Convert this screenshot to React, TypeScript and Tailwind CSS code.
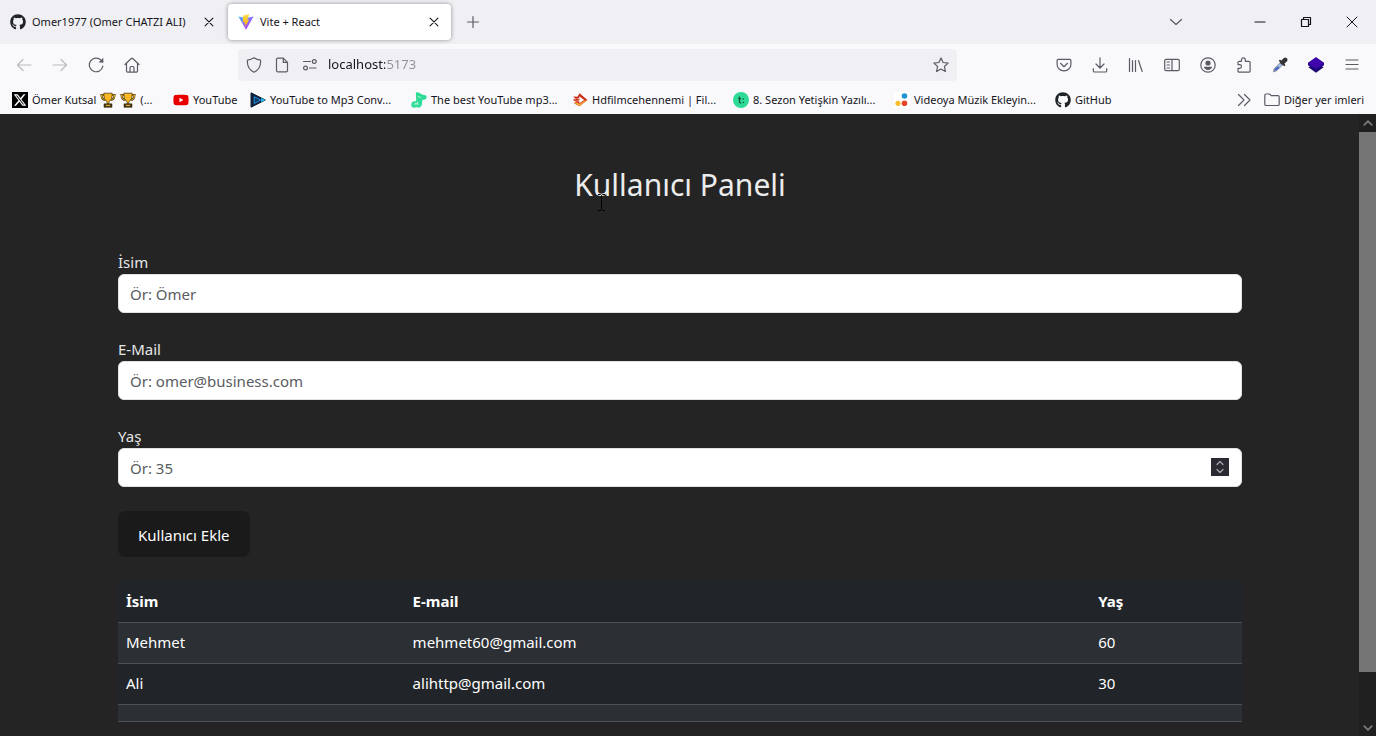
import React from 'react';
import { FaGithub, FaXTwitter, FaYoutube } from 'react-icons/fa6';

type IconProps = { children: React.ReactNode; size?: string };

function Icon({ children, size = 'size-4' }: IconProps) {
  return (
    <svg
      viewBox="0 0 16 16"
      className={`${size} shrink-0`}
      fill="none"
      stroke="currentColor"
      strokeWidth="1.2"
      strokeLinecap="round"
      strokeLinejoin="round"
      aria-hidden="true"
    >
      {children}
    </svg>
  );
}

const ViteLogo = () => (
  <svg viewBox="0 0 16 16" className="size-4 shrink-0" aria-hidden="true">
    <defs>
      <linearGradient id="vite-a" x1="0" y1="0" x2="0.7" y2="1">
        <stop offset="0" stopColor="#41b9f5" />
        <stop offset="0.5" stopColor="#8a70fb" />
        <stop offset="1" stopColor="#bd34fe" />
      </linearGradient>
      <linearGradient id="vite-b" x1="0" y1="0" x2="0" y2="1">
        <stop offset="0" stopColor="#ffdc4a" />
        <stop offset="1" stopColor="#ffa800" />
      </linearGradient>
    </defs>
    <path d="M.4 2.5 8 15.7 15.6 2.5 8 4z" fill="url(#vite-a)" />
    <path d="M11.300.300 5.200 1.500 4.800 8.200l2.100-.4-.5 2.600 1.300-.4-.8 3.600 4.300-8-2 .4z" fill="url(#vite-b)" />
  </svg>
);

const Trophy = () => (
  <svg viewBox="0 0 16 16" className="size-4 shrink-0" aria-hidden="true">
    <path d="M4 3H1.500c0 3 1 4.700 4 5M12 3h2.500c0 3-1 4.700-4 5" fill="none" stroke="#3a2b08" strokeWidth="2" />
    <path d="M4 3H1.500c0 3 1 4.700 4 5M12 3h2.500c0 3-1 4.700-4 5" fill="none" stroke="#f5b51c" strokeWidth="1" />
    <path d="M3.800 1.200h8.400c0 4-.6 7-3.200 8.200v2.200H7V9.400C4.400 8.200 3.800 5.200 3.800 1.200z" fill="#f7b824" stroke="#3a2b08" strokeWidth=".7" />
    <path d="M4 11.800h8v3.500H4z" fill="#4c3b16" stroke="#241a05" strokeWidth=".5" />
    <path d="M6 12.800h4v1.200H6z" fill="#d9a426" />
  </svg>
);

const XLogo = () => (
  <span className="flex size-4 shrink-0 items-center justify-center bg-black text-white">
    <FaXTwitter className="size-3.5" />
  </span>
);

const YoutubeLogo = () => <FaYoutube className="size-4 shrink-0 text-[#e80000]" />;

const PlayLogo = () => (
  <svg viewBox="0 0 16 16" className="size-4 shrink-0" aria-hidden="true">
    <path d="M1 .8 15.300 8 1 15.200z" fill="#12203c" stroke="#12203c" strokeLinejoin="round" />
    <path d="M4.200 4.800 10.500 8l-6.300 3.500z" fill="#10355a" stroke="#2196e8" strokeWidth="1" />
    <path d="M11 6 15.700 8 11 10.200z" fill="#27b6e8" />
  </svg>
);

const NoteLogo = () => (
  <svg viewBox="0 0 16 16" className="size-4 shrink-0" aria-hidden="true">
    <path
      d="M5 .6c2-.8 3.400.6 5 1.300 1.800.8 4 1 5.300 1.800.6.400.4 2.600-.4 3.300-1 .8-2.300.4-3.400 1.200-.8.7-.2 2.300-.6 4.200-.4 1.900-1.800 3.200-3.600 3.200-1 0-1.500-.4-2-.6-1 .8-2.700.9-3.800.2C.3 14.500-.2 12.400.8 10.800c.9-1.400 2.300-1.700 4.200-1.600C5.500 6 4.600 3.200 5 .6z"
      fill="#2edb96"
    />
    <path d="m6.600 4 3.600 2M6.500 9.600v2.600M5 11.400v2.200M2.600 12.600l2.200-1.400 3.200 1.200" fill="none" stroke="#b5f5da" strokeWidth=".9" />
  </svg>
);

const FilmLogo = () => (
  <svg viewBox="0 0 16 16" className="size-4 shrink-0" aria-hidden="true">
    <path d="M7.500 1.300 15.500 8l-8 6.300L2 11.200l2.200-1.700L.6 8l2.800-1.300-2.200-2.200 4.300.3z" fill="#c92b12" />
    <path d="m2 11.200 5.500 3.100L15.500 8l-2.500.2-5.300 3.600-2.900-1.500z" fill="#f2a13a" />
    <path d="M2.800 6.500h4.500V4.300L12.200 8l-4.900 3.200V9.200H4.600z" fill="#fff" />
    <path d="M3.200 5.900 8.500 7.900l-4 1.200z" fill="#c92b12" />
  </svg>
);

const TechLogo = () => (
  <svg viewBox="0 0 16 16" className="size-4 shrink-0" aria-hidden="true">
    <circle cx="8" cy="8" r="8" fill="#2edb96" />
    <path d="M6.500 4.500v5.300c0 .8.500 1.200 1.600 1M5.200 6.600h2.900" fill="none" stroke="#14513a" strokeWidth="1.200" />
    <circle cx="10.300" cy="7" r=".8" fill="#14513a" />
    <circle cx="10.300" cy="10.500" r=".8" fill="#14513a" />
  </svg>
);

const DotsLogo = () => (
  <svg viewBox="0 0 16 16" className="size-4 shrink-0" aria-hidden="true">
    <path d="M0 0h16v16H0z" fill="#fff" />
    <circle cx="10.500" cy="4" r="2.800" fill="#2394d2" />
    <circle cx="4" cy="11.300" r="2.600" fill="#f9bd2c" />
    <circle cx="10.500" cy="11.300" r="2.800" fill="#e8442a" />
  </svg>
);

const GithubLogo = () => <FaGithub className="size-4 shrink-0 text-[#1f2328]" />;

const CloseIcon = ({ size }: { size?: string }) => (
  <Icon size={size}>
    <path d="m3.500 3.500 9 9M12.500 3.500l-9 9" />
  </Icon>
);

const bookmarks = [
  { icon: XLogo, label: 'Ömer Kutsal', extra: true, width: 'w-[161px]' },
  { icon: YoutubeLogo, label: 'YouTube', width: 'w-[77px]' },
  { icon: PlayLogo, label: 'YouTube to Mp3 Conv...', width: 'w-[161px]' },
  { icon: NoteLogo, label: 'The best YouTube mp3...', width: 'w-[161px]' },
  { icon: FilmLogo, label: 'Hdfilmcehennemi | Fil...', width: 'w-[161px]' },
  { icon: TechLogo, label: '8. Sezon Yetişkin Yazılı...', width: 'w-[161px]' },
  { icon: DotsLogo, label: 'Videoya Müzik Ekleyin...', width: 'w-[161px]' },
  { icon: GithubLogo, label: 'GitHub', width: 'w-[77px]' },
];

const users = [
  { name: 'Mehmet', email: 'mehmet60@gmail.com', age: '60' },
  { name: 'Ali', email: 'alihttp@gmail.com', age: '30' },
];

function TabStrip() {
  return (
    <div className="flex h-11 items-center bg-[#f0f0f4] text-[#15141a]">
      <div className="flex w-[228px] items-center gap-1.5 pr-3 pl-2.5">
        <GithubLogo />
        <span className="flex-1 whitespace-nowrap">Omer1977 (Omer CHATZI ALI)</span>
        <button type="button" aria-label="Sekmeyi kapat">
          <CloseIcon size="size-3.5" />
        </button>
      </div>
      <div className="flex h-9 w-[223px] items-center gap-1.5 rounded bg-white px-2.5 shadow-[0_0_4px_rgba(0,0,0,0.4)]">
        <ViteLogo />
        <span className="flex-1">Vite + React</span>
        <button type="button" aria-label="Sekmeyi kapat">
          <CloseIcon size="size-3.5" />
        </button>
      </div>
      <button type="button" aria-label="Yeni sekme" className="ml-3.5 text-[#5b5b66]">
        <Icon>
          <path d="M8 2.500v11M2.500 8h11" />
        </Icon>
      </button>
      <div className="ml-auto flex items-center gap-[30px] pr-4">
        <button type="button" aria-label="Tüm sekmeleri listele" className="mr-[38px] text-[#5b5b66]">
          <Icon>
            <path d="m2.500 5.500 5.500 5 5.500-5" />
          </Icon>
        </button>
        <button type="button" aria-label="Simge durumuna küçült">
          <Icon>
            <path d="M3 8h10" />
          </Icon>
        </button>
        <button type="button" aria-label="Önceki boyut">
          <Icon>
            <path d="M3.500 5.500h7v7h-7zM5.500 5.500v-2h7v7h-2" />
          </Icon>
        </button>
        <button type="button" aria-label="Kapat">
          <Icon>
            <path d="m3 3 10 10M13 3 3 13" strokeWidth="1" />
          </Icon>
        </button>
      </div>
    </div>
  );
}

function Toolbar() {
  return (
    <div className="flex h-[42px] items-center text-[#5b5b66]">
      <div className="flex w-[238px] items-center gap-5 pl-4">
        <button type="button" aria-label="Geri" className="text-[#bbbbc2]">
          <Icon>
            <path d="M15 8H1.500M7 2.500 1.500 8 7 13.500" />
          </Icon>
        </button>
        <button type="button" aria-label="İleri" className="text-[#bbbbc2]">
          <Icon>
            <path d="M1 8h13.500M9 2.500 14.500 8 9 13.500" />
          </Icon>
        </button>
        <button type="button" aria-label="Yenile">
          <Icon>
            <path d="M14.800 9.200a6.800 6.800 0 1 1-1.800-6L14.700 5" />
            <path d="M15.300.8v4.700h-4.700z" fill="currentColor" stroke="none" />
          </Icon>
        </button>
        <button type="button" aria-label="Giriş sayfası">
          <Icon>
            <path d="m1 7.500 6.300-6a1 1 0 0 1 1.400 0l6.300 6M2.500 6.500V14a1.200 1.200 0 0 0 1.200 1.200h8.600a1.200 1.200 0 0 0 1.200-1.200V6.500M6 15v-4.300a1.200 1.200 0 0 1 1.200-1.200h1.600a1.200 1.200 0 0 1 1.200 1.200V15" />
          </Icon>
        </button>
      </div>
      <div className="flex h-8 max-w-[719px] flex-1 items-center gap-3 rounded bg-[#f0f0f4] px-2">
        <Icon>
          <path d="M8 .8c2 1.300 4 2 6.500 2.300.6 5.400-1.500 9.700-6.500 12.100C3 12.800.9 8.500 1.500 3.100 4 2.800 6 2.100 8 .8z" />
        </Icon>
        <Icon>
          <path d="M3.700 1.200h5.600L13.500 5.400v8.200a1.200 1.200 0 0 1-1.200 1.200H3.700a1.200 1.200 0 0 1-1.200-1.200V2.400a1.200 1.200 0 0 1 1.200-1.200zM9.300 1.200v4.200h4.200" />
        </Icon>
        <Icon>
          <path d="M1.500 4.500h7M7.500 11H14" />
          <circle cx="12.300" cy="4.500" r="1.900" />
          <circle cx="3.500" cy="11" r="1.900" />
        </Icon>
        <input
          type="text"
          aria-label="Adres"
          defaultValue="localhost:5173"
          className="-ml-0.5 min-w-0 flex-1 bg-[linear-gradient(90deg,#15141a_57px,#8f8f99_57px)] bg-clip-text text-[13px] text-transparent caret-black outline-none"
        />
        <button type="button" aria-label="Bu sayfayı yer imlerine ekle">
          <Icon>
            <path d="m8 .9 2.100 4.600 5 .6-3.700 3.400 1 5L8 12l-4.400 2.500 1-5L.9 6.100l5-.6z" />
          </Icon>
        </button>
      </div>
      <div className="ml-auto flex items-center gap-5 pr-4 pl-4">
        <button type="button" aria-label="Pocket'a kaydet">
          <Icon>
            <path d="M2.300 2.300h11.400a1.200 1.200 0 0 1 1.200 1.200v4a6.900 6.400 0 0 1-13.800 0v-4a1.200 1.200 0 0 1 1.200-1.200zM4.500 6.300 8 9.700l3.500-3.400" />
          </Icon>
        </button>
        <button type="button" aria-label="İndirilenler">
          <Icon>
            <path d="M8 .8v10M4 7l4 4 4-4M1.300 11.500v2.200a1.300 1.300 0 0 0 1.300 1.300h10.800a1.300 1.300 0 0 0 1.300-1.300v-2.200" />
          </Icon>
        </button>
        <button type="button" aria-label="Kitaplık">
          <Icon>
            <path d="M1.500 1.500v13M4.500 3.500v11M7.500 3.500v11M10.500 3.500l3.700 11" />
          </Icon>
        </button>
        <button type="button" aria-label="Kenar çubuğu">
          <Icon>
            <rect x=".7" y="2.300" width="14.600" height="11.400" rx="1.500" />
            <path d="M8 2.500v11M3 5h2.500M3 8h2.500M3 11h2.500" />
          </Icon>
        </button>
        <button type="button" aria-label="Hesap">
          <Icon>
            <circle cx="8" cy="8" r="7.200" />
            <circle cx="8" cy="6" r="2.600" fill="currentColor" stroke="none" />
            <path d="M3.800 9.700h8.400c-.4 2-2 3.200-4.200 3.200s-3.800-1.200-4.200-3.200z" fill="currentColor" stroke="none" />
          </Icon>
        </button>
        <button type="button" aria-label="Uzantılar">
          <Icon>
            <path d="M5.500 4.300V2.700a1.900 1.900 0 0 1 3.800 0v1.600h3.600a1.200 1.200 0 0 1 1.200 1.200v8.400a1.200 1.200 0 0 1-1.200 1.200H3.200A1.200 1.200 0 0 1 2 13.900v-2.600h1.700a1.800 1.800 0 0 0 0-3.600H2V5.500a1.200 1.200 0 0 1 1.200-1.200z" />
          </Icon>
        </button>
        <button type="button" aria-label="Renk seçici">
          <Icon>
            <path d="m1.500 14.500.8-3 6.400-6.300 2.300 2.300-6.500 6.200z" fill="#a5bce6" stroke="#7d8088" strokeWidth=".8" />
            <path d="m2 14 .9-2.300 3-2.500 1.700 1.500-3 2.500z" fill="#4567bd" stroke="none" />
            <path d="m8 3.800 4.300 4.300" stroke="#333" strokeWidth="2" />
            <path d="m10.500 5.500 2.700-2.700" stroke="#333" strokeWidth="4.500" />
          </Icon>
        </button>
        <button type="button" aria-label="Katmanlar">
          <Icon>
            <path d="m8 5.500 7.600 4.800L8 15.700.4 10.300z" fill="#1c0670" stroke="none" />
            <path d="m8 .3 8 5.400v2.600L8 13 0 8.300V5.700z" fill="#24078a" stroke="none" />
            <path d="m8 .3 8 6.200-8 4.800L0 6.500z" fill="#4005ad" stroke="none" />
          </Icon>
        </button>
        <button type="button" aria-label="Menü">
          <Icon>
            <path d="M2 3h12M2 7.500h12M2 12h12" />
          </Icon>
        </button>
      </div>
    </div>
  );
}

function BookmarksBar() {
  return (
    <nav className="flex h-7 items-center pr-3 pl-3 text-[#15141a]">
      {bookmarks.map(({ icon: Logo, label, extra, width }) => (
        <a key={label} href="#" className={`${width} flex shrink-0 items-center gap-1 whitespace-nowrap`}>
          <Logo />
          <span>{label}</span>
          {extra && (
            <>
              <Trophy />
              <Trophy />
              <span>(...</span>
            </>
          )}
        </a>
      ))}
      <button type="button" aria-label="Diğer yer imlerini göster" className="mr-3 ml-auto text-[#5b5b66]">
        <Icon>
          <path d="m2.500 2.500 5.500 5.500-5.500 5.500M8.500 2.500 14 8l-5.500 5.500" />
        </Icon>
      </button>
      <a href="#" className="flex items-center gap-1 whitespace-nowrap">
        <span className="text-[#5b5b66]">
          <Icon>
            <path d="M2 2h3.500l2 1.700H14a1.200 1.200 0 0 1 1.200 1.200v7.400a1.200 1.200 0 0 1-1.200 1.200H2A1.200 1.200 0 0 1 .8 12.300V3.200A1.200 1.200 0 0 1 2 2z" />
          </Icon>
        </span>
        Diğer yer imleri
      </a>
    </nav>
  );
}

type FieldProps = { id: string; label: string; type: string; placeholder: string };

function Field({ id, label, type, placeholder }: FieldProps) {
  return (
    <div className="flex flex-col">
      <label htmlFor={id} className="leading-6 text-[#e6e6e6]">
        {label}
      </label>
      <div className="relative flex">
        <input
          id={id}
          type={type}
          placeholder={placeholder}
          className="h-[39px] w-full rounded-md border border-[#dee2e6] bg-white px-[11px] text-[#212529] [appearance:textfield] placeholder:text-[#595c5f]"
        />
        {type === 'number' && (
          <span aria-hidden="true" className="absolute top-2.5 right-[13px] flex size-[18px] items-center justify-center bg-[#2b2a33] text-[#a8a8b0]">
            <Icon>
              <path d="m5 5.500 3-3 3 3M5 10.500l3 3 3-3" />
            </Icon>
          </span>
        )}
      </div>
    </div>
  );
}

function Scrollbar() {
  return (
    <div className="flex w-[17px] shrink-0 flex-col items-center bg-[#202020] text-[#777]" aria-hidden="true">
      <div className="flex h-[18px] items-center">
        <Icon size="size-3">
          <path d="m3 10.500 5-5 5 5" strokeWidth="2.500" />
        </Icon>
      </div>
      <div className="w-full flex-[540] bg-[#757575]" />
      <div className="flex-[47]" />
      <div className="flex h-[17px] items-center">
        <Icon size="size-3">
          <path d="m3 5.500 5 5 5-5" strokeWidth="2.500" />
        </Icon>
      </div>
    </div>
  );
}

function Panel() {
  return (
    <main className="min-w-0 flex-1 pr-[117px] pl-[118px] text-[15px]">
      <header className="flex justify-center pt-12">
        <h1 className="relative text-[30px] leading-[46px] text-[#ececec]">
          Kullanıcı Paneli
          <svg viewBox="0 0 9 17" className="absolute top-8 left-[23px] h-[17px] w-[9px]" aria-hidden="true">
            <path d="M1 .5h2.500l1 1 1-1H8M4.500 1.500v14M1 16.500h2.500l1-1 1 1H8" fill="none" stroke="#000" />
          </svg>
        </h1>
      </header>
      <form className="mt-[42px] flex flex-col gap-6">
        <Field id="name" label="İsim" type="text" placeholder="Ör: Ömer" />
        <Field id="email" label="E-Mail" type="email" placeholder="Ör: omer@business.com" />
        <Field id="age" label="Yaş" type="number" placeholder="Ör: 35" />
        <button type="button" className="h-[46px] self-start rounded-lg bg-[#1a1a1a] px-5 pt-0.5 text-white">
          Kullanıcı Ekle
        </button>
      </form>
      <table className="mt-6 w-full table-fixed border-collapse text-left text-white">
        <thead>
          <tr className="h-[41px] border-b border-[#4d5154] bg-[#212529]">
            <th className="w-[25.500%] px-2 font-bold">İsim</th>
            <th className="w-[61%] px-2 font-bold">E-mail</th>
            <th className="px-2 font-bold">Yaş</th>
          </tr>
        </thead>
        <tbody>
          {users.map((user) => (
            <tr key={user.name} className="h-[41px] border-b border-[#4d5154] odd:bg-[#2c3034] even:bg-[#212529]">
              <td className="px-2">{user.name}</td>
              <td className="px-2">{user.email}</td>
              <td className="px-2">{user.age}</td>
            </tr>
          ))}
          <tr className="h-[17px] border-b border-[#4d5154] bg-[#2c3034]">
            <td />
            <td />
            <td />
          </tr>
        </tbody>
      </table>
    </main>
  );
}

export default function App() {
  return (
    <div className="flex min-h-screen flex-col bg-[#242424] font-['Noto_Sans','Open_Sans',sans-serif]">
      <div className="bg-[#f9f9fb] text-[11px]">
        <TabStrip />
        <Toolbar />
        <BookmarksBar />
      </div>
      <div className="flex flex-1">
        <Panel />
        <Scrollbar />
      </div>
    </div>
  );
}
